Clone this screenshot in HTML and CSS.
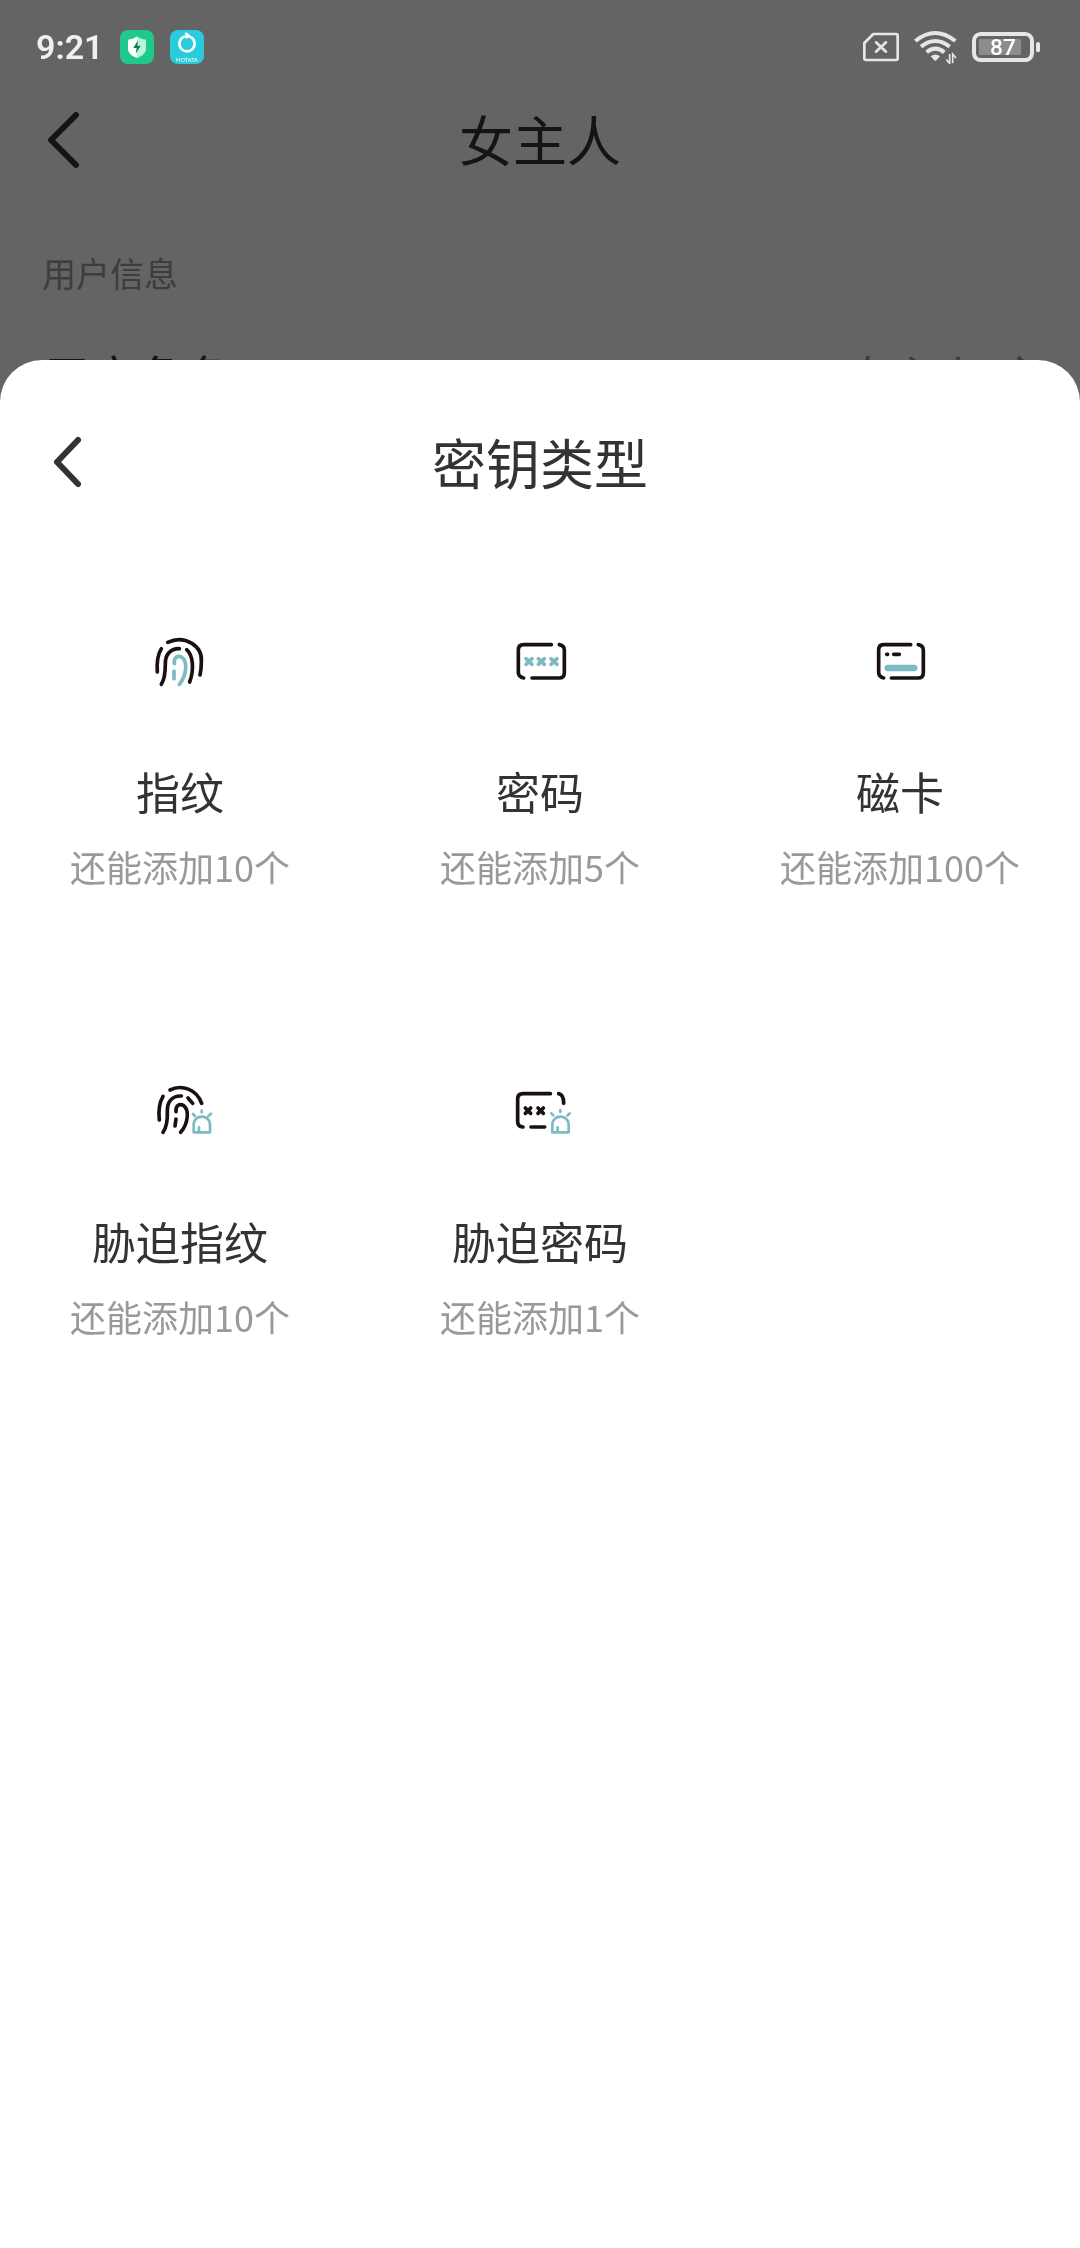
FILE: index.html
```
<!DOCTYPE html>
<html lang="zh-CN">
<head>
  <meta charset="UTF-8">
  <meta name="viewport" content="width=device-width, initial-scale=1.0">
  <title>密钥类型</title>
  <link rel="stylesheet" href="styles.css">
</head>
<body>
  <div class="page">
    <header class="page-header">
      <button class="back" type="button" aria-label="返回">
        <svg width="36" height="60" viewBox="0 0 36 60"><path d="M32 4L7 29l25 25"/></svg>
      </button>
      <h1>女主人</h1>
    </header>
    <main class="user-info">
      <h2>用户信息</h2>
      <a class="row" href="#role">
        <span class="row-name">用户角色</span>
        <span class="row-value">女主人</span>
        <svg class="row-arrow" width="22" height="40" viewBox="0 0 22 40"><path d="M2 2l18 18L2 38"/></svg>
      </a>
    </main>
  </div>

  <div class="mask"></div>

  <div class="status-bar">
    <span class="time">9:21</span>
    <svg width="34" height="34" viewBox="0 0 102 102">
      <rect width="102" height="102" rx="24" fill="#1ec98b"/>
      <path d="M51 19c9 7 17 9 27 10v27c0 13-12 22-27 28z" fill="#b9f3dc"/>
      <path d="M51 19c-9 7-17 9-27 10v27c0 13 12 22 27 28z" fill="#fff"/>
      <path d="M54 31L40 54h10l-3 17 15-24H52z" fill="#157a5a"/>
    </svg>
    <svg width="34" height="34" viewBox="0 0 102 102">
      <rect width="102" height="102" rx="24" fill="#2accdb"/>
      <circle cx="51" cy="41" r="23" fill="none" stroke="#fff" stroke-width="8"/>
      <path d="M45 9l10 5-6 12" fill="none" stroke="#fff" stroke-width="5"/>
      <text class="app-name" x="51" y="96" text-anchor="middle">HOTATA</text>
    </svg>
    <div class="signals">
      <svg width="36" height="30" viewBox="0 0 108 90">
        <path d="M31 6h68q5 0 5 5v68q0 5-5 5H9q-5 0-5-5V33z" fill="none" stroke="#e6e6e6" stroke-width="8" stroke-linejoin="round"/>
        <path d="M39 31l30 28M69 31L39 59" stroke="#e6e6e6" stroke-width="8" stroke-linecap="round"/>
      </svg>
      <svg width="43" height="34" viewBox="0 0 129 102">
        <g fill="none" stroke="#e6e6e6" stroke-width="12">
          <path d="M4 33q59-48 120 0"/>
          <path d="M21 50q43-34 86 0"/>
          <path d="M38 67q26-22 53 0"/>
        </g>
        <path d="M50 79q14-11 28 0L67 91q-3 3-6 0z" fill="#e6e6e6"/>
        <path d="M107 72v28l-10-11M116 100V72l10 12" fill="none" stroke="#e6e6e6" stroke-width="5"/>
      </svg>
      <svg width="69" height="30" viewBox="0 0 207 90">
        <rect x="6" y="6" width="174" height="78" rx="20" fill="none" stroke="#e6e6e6" stroke-width="12"/>
        <rect x="21" y="21" width="126" height="48" rx="4" fill="#8c8c8c"/>
        <rect x="192" y="30" width="12" height="31" rx="6" fill="#e6e6e6"/>
        <text class="charge" x="93" y="69" text-anchor="middle">87</text>
      </svg>
    </div>
  </div>

  <section class="sheet">
    <header class="sheet-header">
      <button class="back" type="button" aria-label="返回">
        <svg width="36" height="60" viewBox="0 0 36 60"><path d="M31 6L10 28l21 22"/></svg>
      </button>
      <h2>密钥类型</h2>
    </header>

    <div class="keys">
      <button class="key" type="button">
        <svg class="key-icon" viewBox="0 0 300 240">
          <g class="ink">
            <path d="M113 67C165 43 218 78 214 125q0 24-4 40"/>
            <path d="M94 86c-13 20-14 42-12 70"/>
            <path d="M148 86c-30 0-43 21-42 47 0 26-2 44-12 60"/>
            <path d="M170 89c18 16 24 56 9 97"/>
          </g>
          <path class="tint" d="M133 131c-2-20 10-25 21-20 19 11 18 52-6 82M132 153v23"/>
        </svg>
        <span class="key-name">指纹</span>
        <span class="key-left">还能添加10个</span>
      </button>
      <button class="key" type="button">
        <svg class="key-icon" viewBox="0 0 300 240">
          <path class="ink" d="M184 74H101q-16 0-16 16v67q0 14 16 17M208 74q15 3 15 16v68q0 16-16 16h-81"/>
          <g class="tint cross">
            <path d="M108 116l18 17m0-17l-18 17"/>
            <path d="M145 116l18 17m0-17l-18 17"/>
            <path d="M183 116l18 17m0-17l-18 17"/>
          </g>
        </svg>
        <span class="key-name">密码</span>
        <span class="key-left">还能添加5个</span>
      </button>
      <button class="key" type="button">
        <svg class="key-icon" viewBox="0 0 300 240">
          <path class="ink" d="M182 74H101q-15 0-15 16v67q0 14 15 17M205 74q15 3 15 16v68q0 16-16 16h-80"/>
          <path class="ink" d="M110 103h3M131 103h17"/>
          <path class="tint bar" d="M113 144h80"/>
        </svg>
        <span class="key-name">磁卡</span>
        <span class="key-left">还能添加100个</span>
      </button>
      <button class="key" type="button">
        <svg class="key-icon" viewBox="0 0 300 240">
          <g class="ink">
            <path d="M120 60c35-18 80-2 95 40"/>
            <path d="M99 79c-13 22-14 44-11 71"/>
            <path d="M154 78c-29-1-43 18-42 47 1 27-2 47-13 62"/>
            <path d="M174 84l14 16"/>
            <path d="M138 125c-2-20 12-25 23-18 18 14 13 55-9 80M138 147l-3 21"/>
          </g>
          <g class="tint alarm">
            <path d="M191 187v-23c0-32 49-32 49 0v23zM207 186v-14M215 122v5M189 132l6 6M243 131l-8 7"/>
          </g>
        </svg>
        <span class="key-name">胁迫指纹</span>
        <span class="key-left">还能添加10个</span>
      </button>
      <button class="key" type="button">
        <svg class="key-icon" viewBox="0 0 300 240">
          <path class="ink" d="M181 71H99q-16 0-16 16v68q0 14 16 16M206 71q15 3 15 29M123 171h41"/>
          <g class="ink cross">
            <path d="M106 114l16 16m0-16l-16 16"/>
            <path d="M144 114l16 16m0-16l-16 16"/>
          </g>
          <g class="tint alarm">
            <path d="M187 187v-23c0-32 49-32 49 0v23zM203 186v-14M211 120v6M184 130l6 6M239 130l-7 7"/>
          </g>
        </svg>
        <span class="key-name">胁迫密码</span>
        <span class="key-left">还能添加1个</span>
      </button>
    </div>
  </section>
</body>
</html>
```
FILE: styles.css
```
* {
  box-sizing: border-box;
}
body {
  margin: 0;
  min-height: 100vh;
  background: #fafafa;
  color: #333;
  font-family: "Noto Sans CJK SC", sans-serif;
}
h1, h2 {
  margin: 0;
  font-weight: normal;
}
button {
  padding: 0;
  border: none;
  background: none;
  color: inherit;
  font-family: inherit;
}

/* page under the sheet */
.page {
  padding-top: 94px;
}
.page-header, .sheet-header {
  display: grid;
  grid-template-columns: 1fr auto 1fr;
  align-items: center;
  padding: 0 44px;
}
.page-header {
  height: 94px;
}
.page-header h1, .sheet-header h2 {
  padding-bottom: 4px;
  font-size: 54px;
  line-height: 80px;
}
.back {
  justify-self: start;
  display: flex;
}
.back path {
  fill: none;
  stroke: #333;
  stroke-width: 6;
  stroke-linecap: round;
  stroke-linejoin: round;
}
.user-info {
  padding: 65px 42px 0;
}
.user-info h2 {
  color: #999;
  font-size: 34px;
  line-height: 40px;
}
.row {
  display: flex;
  align-items: center;
  height: 96px;
  margin-top: 34px;
  color: #333;
  text-decoration: none;
}
.row-name {
  flex: 1;
  font-size: 48px;
}
.row-value {
  color: #999;
  font-size: 44px;
}
.row-arrow {
  margin-left: 36px;
  fill: none;
  stroke: #999;
  stroke-width: 4;
}

.mask {
  position: fixed;
  inset: 0;
  background: rgba(0, 0, 0, 0.6);
}

.status-bar {
  position: fixed;
  top: 0;
  left: 0;
  right: 0;
  display: flex;
  align-items: center;
  gap: 16px;
  height: 94px;
  padding: 0 39px 0 36px;
}
.time {
  color: #f0f0f0;
  font-family: Roboto, sans-serif;
  font-size: 34px;
  font-weight: 600;
}
.signals {
  display: flex;
  align-items: center;
  gap: 15px;
  margin-left: auto;
}
.app-name {
  fill: #fff;
  font-family: Lato, sans-serif;
  font-size: 17px;
}
.charge {
  fill: #fff;
  font-family: Roboto, sans-serif;
  font-size: 68px;
  font-weight: 500;
}

/* bottom sheet */
.sheet {
  position: fixed;
  top: 360px;
  left: 0;
  right: 0;
  bottom: 0;
  overflow-y: auto;
  background: #fff;
  border-radius: 42px 42px 0 0;
}
.sheet-header {
  height: 208px;
  padding: 0 47px;
}
.keys {
  display: grid;
  grid-template-columns: repeat(3, 1fr);
}
.key {
  display: flex;
  flex-direction: column;
  align-items: center;
  height: 450px;
  padding-top: 52px;
}
.key-icon {
  width: 100px;
  height: 80px;
  fill: none;
  stroke-linecap: round;
  stroke-linejoin: round;
}
.key-name {
  margin-top: 61px;
  font-size: 44px;
  line-height: 60px;
}
.key-left {
  margin-top: 20px;
  color: #999;
  font-size: 36px;
  line-height: 50px;
}
.ink {
  stroke: #1a1013;
  stroke-width: 11;
}
.tint {
  stroke: #7dbac4;
  stroke-width: 11;
}
.bar {
  stroke-width: 19;
}
.alarm {
  stroke-width: 8;
}
```
